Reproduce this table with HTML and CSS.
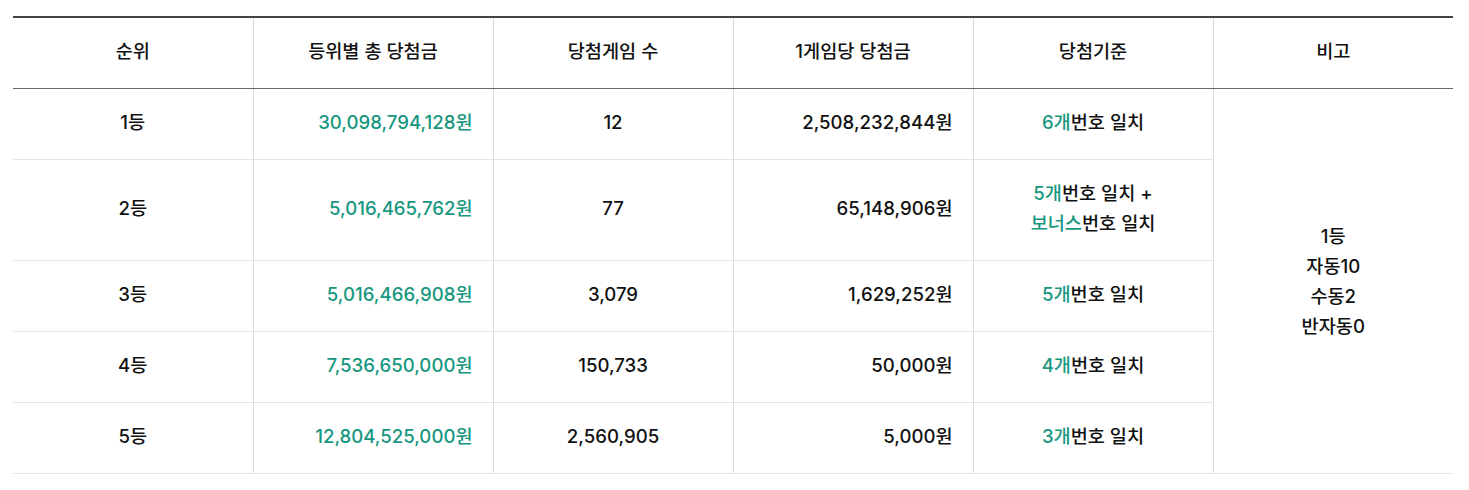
FILE: index.html
```html
<!DOCTYPE html>
<html lang="ko">
<head>
<meta charset="utf-8">
<title>당첨 결과</title>
<link rel="stylesheet" href="styles.css">
</head>
<body>
<div class="wrap">
<table class="result">
  <colgroup>
    <col class="c"><col class="c"><col class="c"><col class="c"><col class="c"><col class="c">
  </colgroup>
  <thead>
    <tr>
      <th>순위</th>
      <th>등위별 총 당첨금</th>
      <th>당첨게임 수</th>
      <th>1게임당 당첨금</th>
      <th>당첨기준</th>
      <th class="last">비고</th>
    </tr>
  </thead>
  <tbody>
    <tr>
      <td>1등</td>
      <td class="r g">30,098,794,128원</td>
      <td>12</td>
      <td class="r">2,508,232,844원</td>
      <td><span class="g">6개</span>번호 일치</td>
      <td class="last note" rowspan="5">1등<br>자동10<br>수동2<br>반자동0</td>
    </tr>
    <tr>
      <td>2등</td>
      <td class="r g">5,016,465,762원</td>
      <td>77</td>
      <td class="r">65,148,906원</td>
      <td><span class="g">5개</span>번호 일치 +<br><span class="g">보너스</span>번호 일치</td>
    </tr>
    <tr>
      <td>3등</td>
      <td class="r g">5,016,466,908원</td>
      <td>3,079</td>
      <td class="r">1,629,252원</td>
      <td><span class="g">5개</span>번호 일치</td>
    </tr>
    <tr>
      <td>4등</td>
      <td class="r g">7,536,650,000원</td>
      <td>150,733</td>
      <td class="r">50,000원</td>
      <td><span class="g">4개</span>번호 일치</td>
    </tr>
    <tr>
      <td>5등</td>
      <td class="r g">12,804,525,000원</td>
      <td>2,560,905</td>
      <td class="r">5,000원</td>
      <td><span class="g">3개</span>번호 일치</td>
    </tr>
  </tbody>
</table>
</div>
</body>
</html>
```
FILE: styles.css
```css
html, body {
  margin: 0;
  padding: 0;
  background: #fff;
}
body {
  font-family: Inter, "Noto Sans CJK KR", sans-serif;
  color: #111;
}
.wrap {
  padding: 16px 16px 0 13px;
}
.result {
  width: 1440px;
  border-collapse: collapse;
  table-layout: fixed;
  border-top: 2px solid #444;
}
.result col.c {
  width: 240px;
}
.result th,
.result td {
  font-size: 18.6px;
  font-weight: 500;
  letter-spacing: 0;
  line-height: 30px;
  text-align: center;
  vertical-align: middle;
  padding: 18px 20px 22px;
  border-left: 1px solid #dcdcdc;
  border-bottom: 1px solid #e4e4e4;
}
.result th:first-child,
.result td:first-child {
  border-left: none;
}
.result th {
  border-bottom: 1px solid #666;
  height: 30px;
}
.result td.r {
  text-align: right;
}
.result .g {
  color: #17977f;
}
.result td.note {
  padding: 0 20px;
}
```
